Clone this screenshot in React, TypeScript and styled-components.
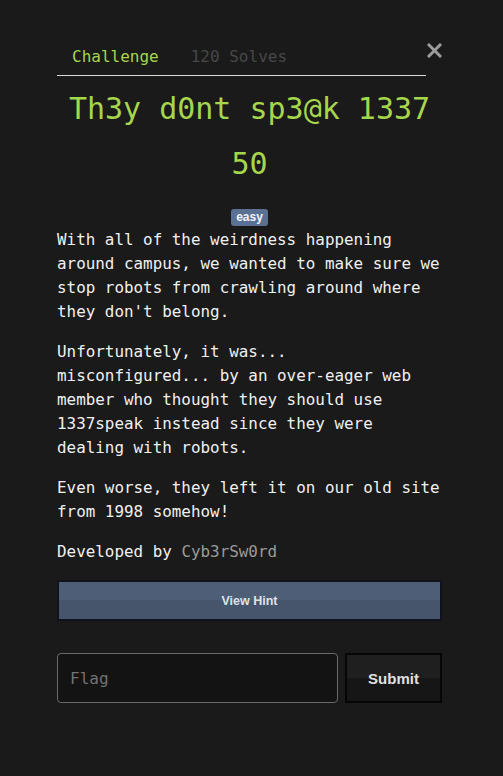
import React from "react";
import styled, { createGlobalStyle } from "styled-components";

const Global = createGlobalStyle`
  html, body { margin: 0; padding: 0; background: #1a1a1a; }
  body { font-family: "DejaVu Sans Mono", "Liberation Mono", monospace; }
`;

const Page = styled.div`
  width: 503px;
  min-height: 776px;
  background: #1a1a1a;
  box-sizing: border-box;
  padding: 37px 61px 0 57px;
`;

const Header = styled.div`
  display: flex;
  align-items: flex-start;
`;

const Tabs = styled.nav`
  flex: 1;
  display: flex;
  border-bottom: 1px solid #d9d9d9;
`;

const Tab = styled.span<{ $active?: boolean }>`
  padding: 8px 16px 6px 15px;
  font-size: 16px;
  line-height: 24px;
  color: ${(p) => (p.$active ? "#a6d64c" : "#474747")};
  & + & { padding-left: 16px; }
`;

const Close = styled.button`
  background: none;
  border: none;
  padding: 0;
  margin: 4px 0 0 0;
  width: 16px;
  height: 18px;
  display: flex;
  align-items: center;
  justify-content: center;
  cursor: pointer;
`;

const Title = styled.h1`
  margin: 15px 0 0;
  text-align: center;
  font-size: 30px;
  line-height: 36px;
  font-weight: normal;
  color: #a6d64c;
`;

const Points = styled.h2`
  margin: 19px 0 0;
  text-align: center;
  font-size: 30px;
  line-height: 36px;
  font-weight: normal;
  color: #a6d64c;
`;

const BadgeRow = styled.div`
  display: flex;
  justify-content: center;
  margin-top: 27px;
`;

const Badge = styled.span`
  background: #5b7194;
  color: #f2f4f8;
  font-family: "Liberation Sans", Arial, sans-serif;
  font-weight: bold;
  font-size: 12px;
  line-height: 17px;
  height: 17px;
  padding: 0 5px;
  border-radius: 3px;
`;

const Description = styled.div`
  margin-top: 2px;
  color: #f0f0f0;
  font-size: 15.9px;
  line-height: 24px;
  p { margin: 0 0 16px; }
`;

const Author = styled.span`
  color: #9a9a9a;
`;

const HintButton = styled.button`
  display: block;
  width: 100%;
  height: 41px;
  margin-top: 1px;
  border: 2px solid #0f141c;
  background: linear-gradient(to bottom, #4e5e76 0%, #4e5e76 50%, #46556b 50%, #46556b 100%);
  color: #dde2ea;
  font-family: "Liberation Sans", Arial, sans-serif;
  font-weight: bold;
  font-size: 12.5px;
  cursor: pointer;
`;

const FlagRow = styled.form`
  display: flex;
  gap: 7px;
  margin-top: 32px;
`;

const FlagInput = styled.input`
  flex: 1;
  min-width: 0;
  height: 50px;
  box-sizing: border-box;
  border: 1px solid #6a6a6a;
  border-radius: 4px;
  background: #131313;
  padding: 0 12px;
  color: #ddd;
  font-family: "DejaVu Sans Mono", "Liberation Mono", monospace;
  font-size: 16px;
  outline: none;
  &::placeholder { color: #727272; }
`;

const SubmitButton = styled.button`
  width: 97px;
  height: 50px;
  box-sizing: border-box;
  border: 2px solid #060606;
  background: linear-gradient(to bottom, #1f1f1f 0%, #1f1f1f 50%, #161616 50%, #161616 100%);
  color: #e0e0e0;
  font-family: "Liberation Sans", Arial, sans-serif;
  font-weight: bold;
  font-size: 15px;
  cursor: pointer;
`;

export default function App() {
  return (
    <>
      <Global />
      <Page>
        <Header>
          <Tabs>
            <Tab $active>Challenge</Tab>
            <Tab>120 Solves</Tab>
          </Tabs>
          <Close aria-label="close">
            <svg width="15" height="15" viewBox="0 0 15 15">
              <path d="M2 2 L13 13 M13 2 L2 13" stroke="#9c9c9c" strokeWidth="3" strokeLinecap="square" />
            </svg>
          </Close>
        </Header>
        <Title>Th3y d0nt sp3@k 1337</Title>
        <Points>50</Points>
        <BadgeRow>
          <Badge>easy</Badge>
        </BadgeRow>
        <Description>
          <p>
            With all of the weirdness happening around campus, we wanted to make sure we stop robots from crawling around where they don't belong.
          </p>
          <p>
            Unfortunately, it was... misconfigured... by an over-eager web member who thought they should use 1337speak instead since they were dealing with robots.
          </p>
          <p>Even worse, they left it on our old site from 1998 somehow!</p>
          <p>
            Developed by <Author>Cyb3rSw0rd</Author>
          </p>
        </Description>
        <HintButton>View Hint</HintButton>
        <FlagRow onSubmit={(e) => e.preventDefault()}>
          <FlagInput placeholder="Flag" />
          <SubmitButton type="submit">Submit</SubmitButton>
        </FlagRow>
      </Page>
    </>
  );
}
